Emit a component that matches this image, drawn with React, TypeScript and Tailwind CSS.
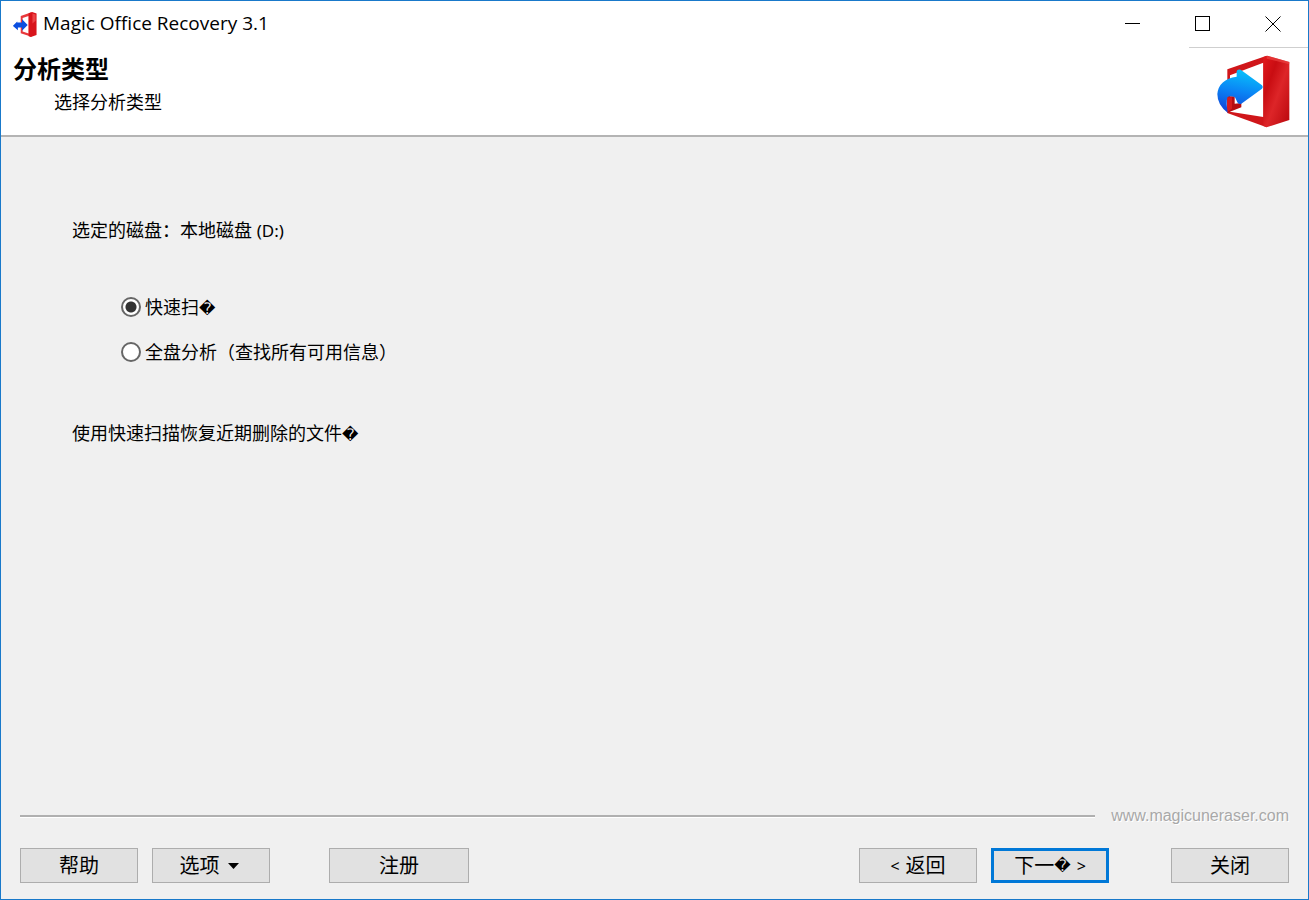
import { useState } from "react";
import type { ReactNode } from "react";

function Unknown() {
  return <span className="font-['DejaVu_Sans'] text-base leading-none">�</span>;
}

function AppIcon() {
  return (
    <svg viewBox="14 12 75 79" className="h-[25px] w-6" aria-hidden="true">
      <path d="M38 25 72 13v77L38 79z" fill="#e8383b" />
      <path d="M44 31 63 25v55l-19-6z" fill="#fff" />
      <path d="M63 16 74 12 88 17v68L70 91l-7-2z" fill="#d8141b" />
      <path d="M75 17l10 3v20l-10 8z" fill="#ec4346" />
      <path
        d="M42 35 60 53 42 71V61H29v9L13 56 27 42v3h15z"
        fill="#0b4fe0"
      />
    </svg>
  );
}

function Logo() {
  return (
    <svg viewBox="53 32 219 217" className="h-[73px] w-[73px]" aria-hidden="true">
      <defs>
        <linearGradient id="slab" x1="0" y1="0" x2="1" y2="1">
          <stop offset="0" stopColor="#e3191c" />
          <stop offset="0.3" stopColor="#c90d12" />
          <stop offset="0.55" stopColor="#dd2528" />
          <stop offset="1" stopColor="#b9070c" />
        </linearGradient>
        <linearGradient id="arrow" x1="0.6" y1="0" x2="0.4" y2="1">
          <stop offset="0" stopColor="#08c4fb" />
          <stop offset="0.5" stopColor="#0a86f5" />
          <stop offset="1" stopColor="#1245d8" />
        </linearGradient>
      </defs>
      <path d="M84 74 202 33v215L84 205z" fill="#d0161a" />
      <path d="M92 92 192 54v163L92 201z" fill="#fff" />
      <path d="M84 155h22v22l20-2v13l-38 15-4 2z" fill="#b50d12" />
      <path d="M84 158h14v34l-14 10z" fill="#d51b1e" />
      <path d="M192 37 204 33 270 52v174l-68 22-10-4z" fill="url(#slab)" />
      <path d="M202 33 270 52v7l-68-17z" fill="#f04a48" opacity="0.6" />
      <path
        d="M112 80q2-8 12-5l64 47q5 5 0 10l-62 45q-8 4-12-4l-7-15q-14-6-23 0-4 16 1 46Q54 181 54 148q4-44 58-52z"
        fill="url(#arrow)"
      />
    </svg>
  );
}

function DialogButton({
  children,
  className = "w-[118px] border border-[#adadad]",
}: {
  children: ReactNode;
  className?: string;
}) {
  return (
    <button
      type="button"
      className={`flex h-[35px] items-center justify-center bg-[#e1e1e1] text-[20px] leading-none ${className}`}
    >
      {children}
    </button>
  );
}

function RadioOption({
  checked,
  onChange,
  children,
}: {
  checked: boolean;
  onChange: () => void;
  children: ReactNode;
}) {
  return (
    <label className="flex h-6 items-center gap-1">
      <input
        type="radio"
        name="analysis"
        checked={checked}
        onChange={onChange}
        className="h-5 w-5 appearance-none rounded-full border-2 border-[#666] bg-white checked:bg-[radial-gradient(circle,#333_5px,#fff_6px)]"
      />
      <span>{children}</span>
    </label>
  );
}

export default function App() {
  const [mode, setMode] = useState("quick");

  return (
    <div className="flex min-h-screen flex-col border border-[#1979ca] bg-[#f0f0f0] font-['Noto_Sans','Noto_Sans_CJK_SC',sans-serif] text-[18px] leading-6 text-black">
      <div className="flex h-[46px] items-center bg-white pl-3">
        <AppIcon />
        <h1 className="ml-1.5 pb-0.5 font-['Open_Sans',sans-serif] text-[19px]">Magic Office Recovery 3.1</h1>
        <div className="ml-auto flex h-full">
          <button type="button" aria-label="Minimize" className="flex w-[70px] items-center justify-center">
            <svg width="16" height="16" shapeRendering="crispEdges">
              <path d="M0 7.5h15" stroke="#000" />
            </svg>
          </button>
          <button type="button" aria-label="Maximize" className="flex w-[70px] items-center justify-center">
            <svg width="16" height="16" shapeRendering="crispEdges">
              <rect x="0.5" y="0.5" width="14" height="14" fill="none" stroke="#000" />
            </svg>
          </button>
          <button type="button" aria-label="Close" className="flex w-[70px] items-center justify-center">
            <svg width="16" height="16">
              <path d="M.5.5l15 15M15.5.5l-15 15" stroke="#000" />
            </svg>
          </button>
        </div>
      </div>

      <header className="flex h-[90px] justify-between border-b-2 border-[#b4b4b4] bg-white pl-3">
        <div className="pt-1.5">
          <h2 className="text-[24px] leading-8 font-bold">分析类型</h2>
          <p className="mt-[5px] pl-[41px]">选择分析类型</p>
        </div>
        <div className="flex w-[119px] justify-end border-t border-[#cfcfcf] pt-[7px] pr-[18px]">
          <Logo />
        </div>
      </header>

      <main className="grow px-[71px] pt-[81px]">
        <p>
          选定的磁盘：本地磁盘 <span className="text-[17px]">(D:)</span>
        </p>
        <div className="mt-[52px] flex flex-col gap-[21px] pl-[49px]">
          <RadioOption checked={mode === "quick"} onChange={() => setMode("quick")}>
            快速扫
            <Unknown />
          </RadioOption>
          <RadioOption checked={mode === "full"} onChange={() => setMode("full")}>
            全盘分析（查找所有可用信息）
          </RadioOption>
        </div>
        <p className="mt-[57px]">
          使用快速扫描恢复近期删除的文件
          <Unknown />
        </p>
      </main>

      <footer className="px-[19px] pb-4">
        <div className="flex items-center gap-4">
          <div className="h-[3px] grow border-t-2 border-b border-t-[#b0b0b0] border-b-white" />
          <a
            href="http://www.magicuneraser.com"
            className="font-['Liberation_Sans',sans-serif] text-base leading-6 text-[#a8a8a8] [text-shadow:1px_1px_0_#fff]"
          >
            www.magicuneraser.com
          </a>
        </div>
        <div className="mt-5 flex">
          <DialogButton>帮助</DialogButton>
          <DialogButton className="ml-[14px] w-[118px] gap-2 border border-[#adadad] pr-1">
            选项
            <svg width="11" height="6" viewBox="0 0 11 6" aria-hidden="true">
              <path d="M0 0h11L5.5 6z" />
            </svg>
          </DialogButton>
          <DialogButton className="ml-[59px] w-[140px] border border-[#adadad]">注册</DialogButton>
          <DialogButton className="ml-auto w-[118px] gap-1.5 border border-[#adadad]">
            <span className="text-base">&lt;</span>
            返回
          </DialogButton>
          <DialogButton className="ml-[14px] w-[118px] border-3 border-[#0078d7]">
            下一
            <Unknown />
            <span className="ml-1.5 text-base">&gt;</span>
          </DialogButton>
          <DialogButton className="ml-[62px] w-[118px] border border-[#adadad]">关闭</DialogButton>
        </div>
      </footer>
    </div>
  );
}
